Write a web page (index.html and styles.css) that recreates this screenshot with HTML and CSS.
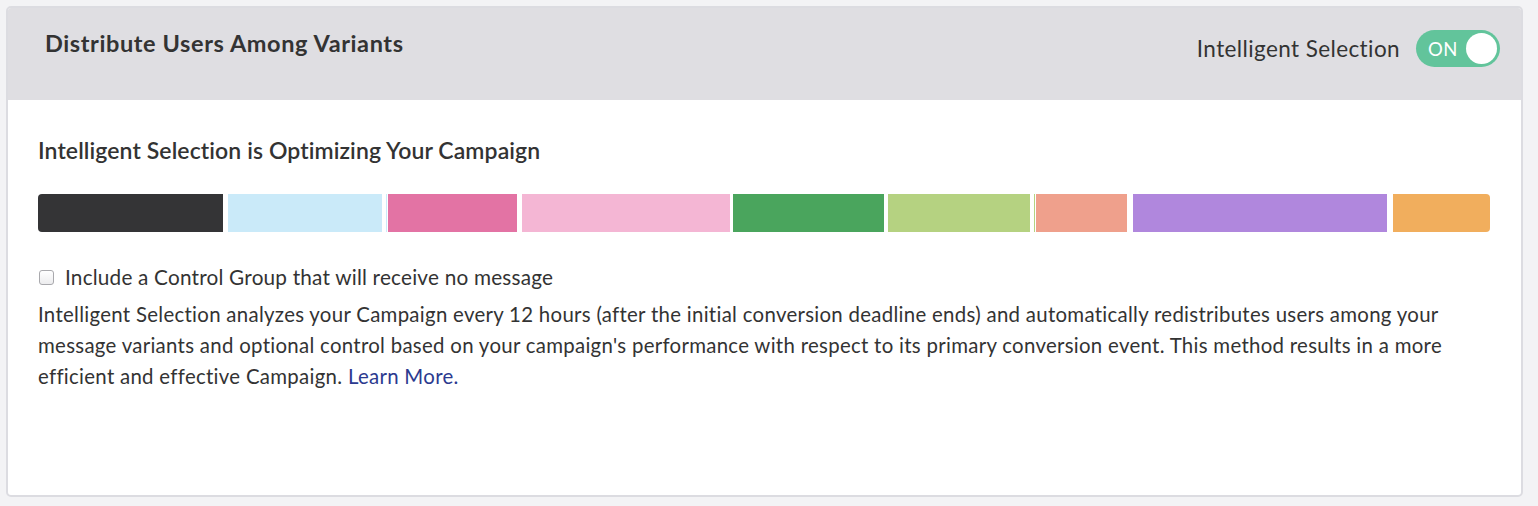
FILE: index.html
```html
<!DOCTYPE html>
<html>
<head>
<meta charset="utf-8">
<link rel="stylesheet" href="styles.css">
</head>
<body>
<div class="card">
  <div class="card-header">
    <h2 class="title">Distribute Users Among Variants</h2>
    <div class="toggle-wrap">
      <span class="toggle-label">Intelligent Selection</span>
      <span class="toggle"><span class="toggle-text">ON</span><span class="knob"></span></span>
    </div>
  </div>
  <div class="card-body">
    <h3 class="subtitle">Intelligent Selection is Optimizing Your Campaign</h3>
    <div class="bar">
      <div class="seg c-dark" style="width:185px"></div>
      <div class="seg c-blue g5" style="width:154px"></div>
      <div class="seg c-blue g4" style="width:1px"></div>
      <div class="seg c-pink g1" style="width:129px"></div>
      <div class="seg c-lpink g5" style="width:208px"></div>
      <div class="seg c-green g3" style="width:151px"></div>
      <div class="seg c-lime g4" style="width:142px"></div>
      <div class="seg c-lime g4" style="width:1px"></div>
      <div class="seg c-salmon g1" style="width:91px"></div>
      <div class="seg c-purple g6" style="width:254px"></div>
      <div class="seg c-orange g6" style="width:97px"></div>
    </div>
    <label class="check">
      <input type="checkbox" class="box">
      <span>Include a Control Group that will receive no message</span>
    </label>
    <p class="desc">Intelligent Selection analyzes your Campaign every 12 hours (after the initial conversion deadline ends) and automatically redistributes users among your message variants and optional control based on your campaign's performance with respect to its primary conversion event. This method results in a more efficient and effective Campaign. <a class="link" href="#">Learn More.</a></p>
  </div>
</div>
</body>
</html>
```
FILE: styles.css
```css
html, body {
  margin: 0;
  padding: 0;
  background: #f3f3f5;
}
body {
  padding: 6px 15px 9px 6px;
  font-family: Lato, "Open Sans", sans-serif;
  color: #333333;
}
.card {
  border: 2px solid #dcdce1;
  border-radius: 5px;
  background: #ffffff;
  box-sizing: border-box;
  height: 491px;
  overflow: hidden;
}
.card-header {
  background: #dfdee2;
  height: 92px;
  display: flex;
  justify-content: space-between;
  align-items: flex-start;
  padding: 0 21px 0 37px;
}
.title {
  margin: 0;
  padding-top: 20px;
  font-size: 23.5px;
  font-weight: 700;
  line-height: 30px;
  letter-spacing: 0.6px;
  color: #333333;
}
.toggle-wrap {
  display: flex;
  align-items: center;
  gap: 16px;
  padding-top: 22px;
}
.toggle-label {
  font-size: 22.5px;
  letter-spacing: 0.4px;
  color: #333333;
}
.toggle {
  width: 84px;
  height: 37px;
  border-radius: 19px;
  background: #62c49b;
  display: flex;
  align-items: center;
  justify-content: space-between;
  padding: 0 3px 0 12px;
  box-sizing: border-box;
}
.toggle-text {
  color: #ffffff;
  font-size: 18.5px;
  letter-spacing: 0.5px;
}
.knob {
  width: 31px;
  height: 31px;
  border-radius: 50%;
  background: #ffffff;
}
.card-body {
  padding: 36px 30px 0 30px;
}
.subtitle {
  margin: 0;
  font-size: 23px;
  font-weight: 600;
  line-height: 28px;
  letter-spacing: 0.1px;
  color: #333333;
}
.bar {
  display: flex;
  height: 38px;
  margin-top: 30px;
  width: 1452px;
}
.seg { height: 100%; flex: none; }
.seg:first-child { border-radius: 4px 0 0 4px; }
.seg:last-child { border-radius: 0 4px 4px 0; }
.g1 { margin-left: 1px; }
.g3 { margin-left: 3px; }
.g4 { margin-left: 4px; }
.g5 { margin-left: 5px; }
.g6 { margin-left: 6px; }
.c-dark { background: #343436; }
.c-blue { background: #caeaf9; }
.c-pink { background: #e373a4; }
.c-lpink { background: #f4b6d4; }
.c-green { background: #4aa55d; }
.c-lime { background: #b5d281; }
.c-salmon { background: #efa08c; }
.c-purple { background: #b087dd; }
.c-orange { background: #f1ae5d; }
.check {
  display: flex;
  align-items: center;
  margin-top: 32px;
  font-size: 20.75px;
  line-height: 26px;
  letter-spacing: 0.2px;
}
.box {
  appearance: none;
  -webkit-appearance: none;
  width: 15px;
  height: 15px;
  margin: 0 11px 0 1px;
  border: 1px solid #a9a9ad;
  border-radius: 3px;
  background: linear-gradient(#ffffff, #ececee);
  box-sizing: border-box;
}
.desc {
  margin: 9px 0 0 0;
  font-size: 20.4px;
  line-height: 31px;
  letter-spacing: 0.3px;
}
.link {
  color: #2b3a8f;
  text-decoration: none;
}
```
